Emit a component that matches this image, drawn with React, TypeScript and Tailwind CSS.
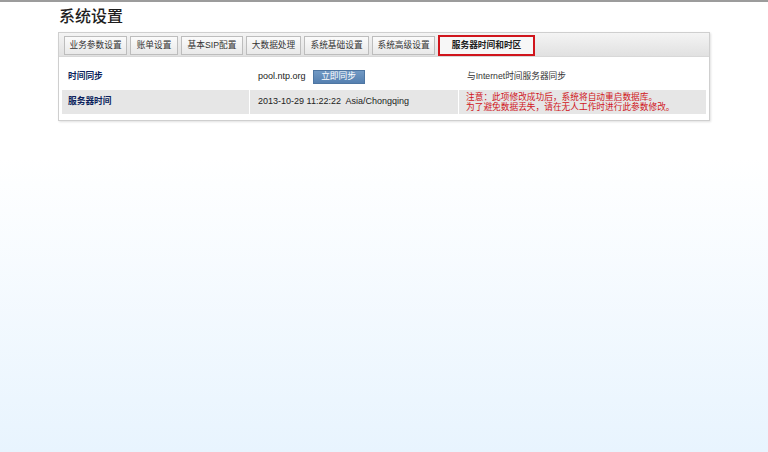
import React from "react";

const tabs: [string, string][] = [
  ["业务参数设置", "w-[63px]"],
  ["账单设置", "w-[48px]"],
  ["基本SIP配置", "w-[62px]"],
  ["大数据处理", "w-[55px]"],
  ["系统基础设置", "w-[65px]"],
  ["系统高级设置", "w-[63px]"],
];

export default function App() {
  return (
    <div
      className="w-[768px] h-[452px] overflow-hidden bg-[linear-gradient(to_bottom,#ffffff_0%,#ffffff_35%,#e8f4fe_100%)] text-[#222]"
      style={{ fontFamily: '"Liberation Sans", Arial, "Noto Sans CJK SC", sans-serif' }}
    >
      <div className="h-[2px] bg-[#9c9c9c]" />
      <div className="pl-[59px] pt-[5px] h-[30px]">
        <h1 className="text-[16px] leading-[20px] text-[#1e1e1e] font-medium">系统设置</h1>
      </div>
      <div className="ml-[58px] w-[652px] border border-[#cfcfcf] shadow-[1px_1px_2px_rgba(0,0,0,0.12)] bg-white">
        <div className="h-[24px] bg-[linear-gradient(to_bottom,#f4f4f4,#e1e1e1)] flex items-end gap-[3px] pl-[5px] border-b border-[#d8d8d8]">
          {tabs.map(([t, w]) => (
            <div
              key={t}
              className={`${w} h-[19px] flex items-center justify-center text-[8.7px] text-[#333] border border-[#bdbdbd] bg-[linear-gradient(to_bottom,#fbfbfb,#e9e9e9)] mb-[1px] whitespace-nowrap`}
            >
              {t}
            </div>
          ))}
          <div className="w-[97px] h-[21px] flex items-center justify-center text-[8.7px] font-bold text-[#222] border-2 border-[#d0151c] bg-[#f7f7f7] whitespace-nowrap">
            服务器时间和时区
          </div>
        </div>
        <div className="px-[3px] pt-[8px] pb-[6px]">
          <div className="flex h-[24px] items-center text-[9px]">
            <div className="w-[189px] pl-[6px] font-bold text-[#0b1f5c] text-[8.7px]">时间同步</div>
            <div className="w-[209px] pl-[7px] flex items-center gap-[7px]">
              <span className="text-[9px]">pool.ntp.org</span>
              <span className="h-[14px] w-[52px] flex items-center justify-center text-white text-[8.7px] bg-[linear-gradient(to_bottom,#7199c4,#5580b0)] border border-[#4e76a2]">
                立即同步
              </span>
            </div>
            <div className="pl-[7px] text-[8.7px] text-[#333]">与Internet时间服务器同步</div>
          </div>
          <div className="flex h-[24px] bg-[#e6e6e6] mt-[1px]">
            <div className="w-[188px] pl-[6px] flex items-center font-bold text-[#0b1f5c] text-[8.7px] border-r border-white">服务器时间</div>
            <div className="w-[209px] pl-[8px] flex items-center text-[9px] border-r border-white whitespace-pre">
              2013-10-29 11:22:22  Asia/Chongqing
            </div>
            <div className="pl-[7px] flex flex-col justify-center text-[8.7px] leading-[10px] text-[#d0141a]">
              <span>注意：此项修改成功后，系统将自动重启数据库。</span>
              <span>为了避免数据丢失，请在无人工作时进行此参数修改。</span>
            </div>
          </div>
        </div>
      </div>
    </div>
  );
}
